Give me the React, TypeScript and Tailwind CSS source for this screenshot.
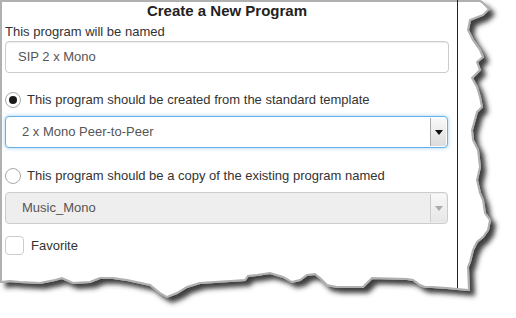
import React from "react";

const paperPath =
  "M1,1 L480,1 L483,3 L489,9 L483,15 L470,20 L468,30 L473,40 L480,50 L483,57 L477,62 L480,70 L472,78 L477,87 L480,97 L482,107 L477,112 L472,130 L473,140 L478,150 L480,167 L477,180 L480,193 L483,200 L485,213 L490,220 L488,230 L483,237 L477,242 L473,250 L470,262 L468,267 L469,290 L457,289 L447,288 L432,287 L425,287 L420,285 L413,280 L407,279 L372,278 L368,282 L363,287 L350,287 L337,287 L327,285 L320,278 L315,274 L307,275 L300,280 L292,282 L283,277 L270,273 L257,275 L248,276 L245,280 L230,281 L200,283 L187,287 L177,293 L167,297 L160,293 L150,285 L127,280 L113,278 L100,278 L90,282 L73,283 L62,278 L55,280 L40,283 L20,282 L10,281 L1,282 Z";

function Radio({ checked }: { checked?: boolean }) {
  return (
    <div className="w-[16px] h-[16px] rounded-full border border-[#a8a8a8] bg-white flex items-center justify-center shrink-0">
      {checked && <div className="w-[8px] h-[8px] rounded-full bg-[#1a1a1a]" />}
    </div>
  );
}

function Caret({ color }: { color: string }) {
  return (
    <svg width="8" height="5" viewBox="0 0 8 5">
      <path d="M0,0 L8,0 L4,5 Z" fill={color} />
    </svg>
  );
}

export default function App() {
  return (
    <div className="relative w-[516px] h-[318px] bg-white overflow-hidden font-['Liberation_Sans',Arial,sans-serif]">
      <svg className="absolute inset-0" width="516" height="318" viewBox="0 0 516 318">
        <defs>
          <filter id="sh" x="-10%" y="-10%" width="130%" height="130%">
            <feDropShadow dx="5" dy="5" stdDeviation="2.5" floodColor="#333" floodOpacity="0.95" />
          </filter>
        </defs>
        <path d={paperPath} fill="white" stroke="#b0b0b0" strokeWidth="2" filter="url(#sh)" />
        <path d={paperPath} fill="white" stroke="#b0b0b0" strokeWidth="2" />
      </svg>

      <div className="relative w-[458px] h-[288px] border-r border-[#222] pl-[5px] pr-[8px] pt-[2px]">
        <div className="text-center text-[15px] leading-[17px] font-bold text-[#222]">Create a New Program</div>

        <div className="mt-[5px] text-[13px] leading-[15px] text-[#333]">This program will be named</div>

        <div className="mt-[2px] h-[32px] rounded-[4px] border border-[#ccc] bg-white flex items-center px-[12px] text-[13px] text-[#555] shadow-[inset_0_1px_1px_rgba(0,0,0,0.075)]">
          SIP 2 x Mono
        </div>

        <div className="mt-[19px] h-[16px] flex items-center gap-[6px] text-[13px] text-[#333]">
          <Radio checked />
          <span>This program should be created from the standard template</span>
        </div>

        <div className="mt-[8px] mr-[1px] h-[32px] rounded-[4px] border border-[#66afe9] bg-white flex items-stretch shadow-[0_0_4px_rgba(102,175,233,0.6)]">
          <div className="flex-1 flex items-center pl-[16px] text-[13px] text-[#555]">2 x Mono Peer-to-Peer</div>
          <div className="w-[16px] my-[1px] mr-[1px] border-l border-[#aaa] bg-gradient-to-b from-[#fafafa] to-[#dcdcdc] flex items-center justify-center">
            <Caret color="#111" />
          </div>
        </div>

        <div className="mt-[20px] h-[16px] flex items-center gap-[6px] text-[13px] text-[#333]">
          <Radio />
          <span>This program should be a copy of the existing program named</span>
        </div>

        <div className="mt-[8px] mr-[1px] h-[32px] rounded-[4px] border border-[#ccc] bg-[#eee] flex items-stretch">
          <div className="flex-1 flex items-center pl-[16px] text-[13px] text-[#555]">Music_Mono</div>
          <div className="w-[16px] my-[1px] mr-[1px] border-l border-[#ccc] bg-gradient-to-b from-[#f8f8f8] to-[#e6e6e6] flex items-center justify-center">
            <Caret color="#aaa" />
          </div>
        </div>

        <div className="mt-[12px] h-[19px] flex items-center gap-[7px] text-[13px] text-[#333]">
          <div className="w-[19px] h-[19px] rounded-[4px] border border-[#ccc] bg-white shrink-0" />
          <span>Favorite</span>
        </div>
      </div>
    </div>
  );
}
